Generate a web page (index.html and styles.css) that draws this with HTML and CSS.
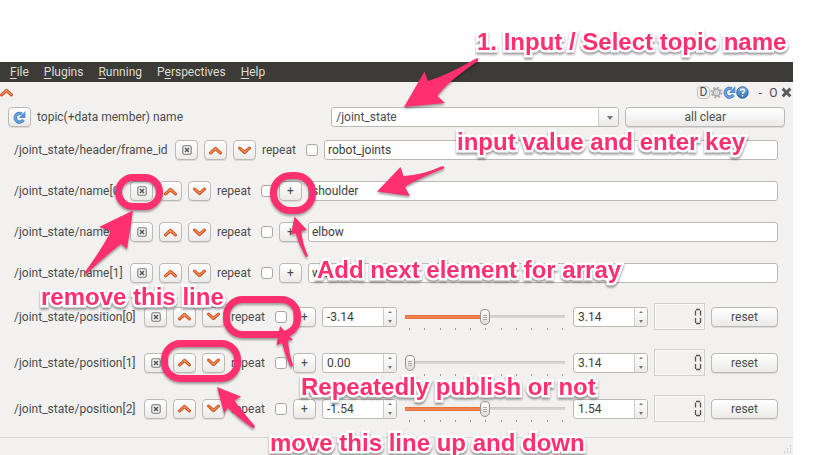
FILE: index.html
```html
<!DOCTYPE html>
<html lang="en">
<head>
<meta charset="utf-8">
<title>Message publisher guide</title>
<link rel="stylesheet" href="styles.css">
</head>
<body>
<svg class="defs" aria-hidden="true">
  <defs>
    <linearGradient id="blue" x1="0" y1="0" x2="0" y2="1"><stop offset="0" stop-color="#7fb4e6"/><stop offset="1" stop-color="#2f6fb0"/></linearGradient>
  </defs>
  <symbol id="up" viewBox="0 0 12 8"><path d="M1.500 6.200 6 2.200l4.500 4" fill="none" stroke="#d0562a" stroke-width="3" stroke-linecap="round" stroke-linejoin="round"/><path d="M1.600 6 6 2.100 10.400 6" fill="none" stroke="#f4955a" stroke-width="1" stroke-linecap="round"/></symbol>
  <symbol id="down" viewBox="0 0 12 8"><path d="M1.500 1.800 6 5.800l4.500-4" fill="none" stroke="#d0562a" stroke-width="3" stroke-linecap="round" stroke-linejoin="round"/><path d="M1.600 1.800 6 5.600l4.400-3.800" fill="none" stroke="#f4955a" stroke-width="1" stroke-linecap="round"/></symbol>
  <symbol id="remove" viewBox="0 0 10 10"><rect x=".8" y=".8" width="8.400" height="8.400" rx="1.500" fill="#f4f4f4" stroke="#777" stroke-width="1.100"/><path d="m3 3 4 4m0-4L3 7" stroke="#555" stroke-width="1.500"/></symbol>
  <symbol id="refresh" viewBox="0 0 14 14"><path d="M11.200 9.600A4.700 4.700 0 1 1 9.600 3.200" fill="none" stroke="#4584c4" stroke-width="3.600"/><path d="M13.300.3v7.200H6.200z" fill="#5291d0"/><path d="M11.200 9.600A4.700 4.700 0 1 1 9.600 3.200" fill="none" stroke="#6fa7de" stroke-width="1.600"/></symbol>
</svg>

<main class="stage">
  <section class="window">
    <nav class="menubar">
      <a href="#"><u>F</u>ile</a><a href="#"><u>P</u>lugins</a><a href="#"><u>R</u>unning</a><a href="#">P<u>e</u>rspectives</a><a href="#"><u>H</u>elp</a>
    </nav>
    <header class="dockbar">
      <svg class="chevron" aria-hidden="true"><use href="#up"/></svg>
      <div class="tools">
        <button class="tool letter" type="button">D</button>
        <button class="tool" type="button" aria-label="Settings"><svg viewBox="0 0 14 14"><circle cx="7" cy="7" r="5.300" fill="none" stroke="#aaa" stroke-width="2" stroke-dasharray="2.100 2.060"/><circle cx="7" cy="7" r="3.600" fill="#eee" stroke="#aaa" stroke-width="1.800"/><circle cx="7" cy="7" r="1.300" fill="#f8f8f8" stroke="#aaa" stroke-width=".8"/></svg></button>
        <button class="tool" type="button" aria-label="Reload"><svg><use href="#refresh"/></svg></button>
        <button class="tool" type="button" aria-label="Help"><svg viewBox="0 0 14 14"><circle cx="7" cy="7" r="6.200" fill="url(#blue)" stroke="#2c639c"/><path d="M4.900 5.300c.1-2.500 4.300-2.400 4.300-.1C9.200 6.800 7 6.700 7 8.500m0 1.200v1.500" fill="none" stroke="#fff" stroke-width="1.500"/></svg></button>
        <button class="tool minimize" type="button">-</button>
        <button class="tool" type="button">O</button>
        <button class="tool" type="button" aria-label="Close"><svg viewBox="0 0 14 14"><path d="m4 4 6 6m0-6-6 6" stroke="#5c5c5c" stroke-width="3.200" stroke-linecap="square"/></svg></button>
      </div>
    </header>

    <div class="topic-row">
      <button class="btn icon-btn" type="button" aria-label="Refresh topics"><svg class="refresh"><use href="#refresh"/></svg></button>
      <label class="topic-label" for="topic">topic(+data member) name</label>
      <div class="combo"><select id="topic"><option>/joint_state</option></select></div>
      <button class="btn clear" type="button">all clear</button>
    </div>

    <div class="lines text-lines" id="text-lines"></div>
    <div class="lines" id="range-lines"></div>

    <footer class="statusbar">
      <svg class="grip" viewBox="0 0 9 9" aria-hidden="true"><path d="M7 1h1M4 4h1m2 0h1M1 7h1m2 0h1m2 0h1" stroke="#c6c3bf" stroke-width="1.500"/></svg>
    </footer>
  </section>

  <svg class="marks" viewBox="0 0 824 455" aria-hidden="true">
    <g fill="none" stroke="#ff2f70" stroke-width="7">
      <rect x="118.500" y="177.500" width="41" height="29" rx="14.500"/>
      <rect x="273.500" y="175.500" width="39" height="35" rx="17"/>
      <rect x="226.500" y="299.500" width="71" height="35" rx="16"/>
      <rect x="164.500" y="343.500" width="73" height="35" rx="16"/>
    </g>
    <g fill="#ff2f70">
      <path d="M404 107 424.500 71.500 428 81Q448 75 476 58.500 479 57.500 478 61 446 83 437.500 96L445 103Z"/>
      <path d="M377 191.500 400.500 167 403.500 176Q423 175 441 166.500 445 165.500 444 168.500 417 179 405 187L410 196Z"/>
      <path d="M133 210.500 127 249 121 244Q103 258 86 274 84 274 85 272 103 247 111 231L99 227Z"/>
      <path d="M294.500 216.500 307 230 301 231Q303 245 308 256 306 258 305 255.500 299 245 295.500 233L291 234.500Z"/>
      <path d="M280 326 293 340 288 340.500Q289 354 293 365 292 368 290 366 285 355 282 343L276.500 345Z"/>
      <path d="M217 387 241 396.500 234.500 400.500Q242 411 254.500 425.500 255 429 252 427.500 238 418 228 408L224 413Z"/>
    </g>
  </svg>
  <p class="note note-topic">1. Input / Select topic name</p>
  <p class="note note-value">input value and enter key</p>
  <p class="note note-add">Add next element for array</p>
  <p class="note note-remove">remove this line</p>
  <p class="note note-repeat">Repeatedly publish or not</p>
  <p class="note note-move">move this line up and down</p>
</main>
<script src="app.js"></script>
</body>
</html>
```
FILE: styles.css
```css
* { box-sizing: border-box; }
body {
  margin: 0;
  background: #fff;
  color: #4c4c4c;
  font: 12px/16px Roboto, "Open Sans", sans-serif;
}
button, input, select { font: inherit; color: inherit; margin: 0; padding: 0; }
.defs { position: absolute; width: 0; height: 0; }
.stage {
  position: relative;
  display: flex;
  min-height: 100vh;
  padding: 62px 31px 0 0;
  overflow: hidden;
}
.window { flex: 1; min-width: 0; display: flex; flex-direction: column; background: #f2f1f0; }

.menubar { display: flex; align-items: center; gap: 15px; height: 20px; padding-left: 10px; background: #3c3b37; }
.menubar a { color: #dfdbd2; text-decoration: none; }
.menubar u { text-underline-offset: 2px; }

.dockbar { display: flex; justify-content: space-between; align-items: center; height: 21px; }
.chevron { width: 13px; height: 9px; }
.tools { display: flex; align-items: center; }
.tool { width: 13px; height: 16px; border: 0; background: none; line-height: 16px; text-align: center; }
.tool svg { display: block; width: 13px; height: 13px; }
.letter { height: 13px; border: 1px solid #c4c2bf; border-radius: 4px; line-height: 11px; }
.minimize { margin-left: 5px; }

.btn {
  height: 20px;
  border: 1px solid #bcb8b4;
  border-radius: 4px;
  background: linear-gradient(#fff, #ebeae9);
  box-shadow: 0 1px 0 #dcdad8;
  line-height: 18px;
  text-align: center;
}
.icon-btn { flex: none; width: 23px; display: flex; align-items: center; justify-content: center; }
.icon-btn svg { width: 13px; height: 9px; }
.icon-btn .remove { width: 10px; height: 10px; }
.icon-btn .refresh { width: 13px; height: 13px; }

.topic-row { display: flex; align-items: center; gap: 6px; height: 28px; padding: 0 8px; }
.topic-label { flex: 289 1 0; }
.combo { position: relative; flex: 289 1 0; height: 20px; }
.combo select {
  appearance: none;
  width: 100%;
  height: 20px;
  padding-left: 4px;
  border: 1px solid #bcb8b4;
  border-radius: 3px;
  background: #fff;
}
.combo::before {
  content: "";
  position: absolute;
  inset: 1px 1px 1px auto;
  width: 19px;
  border-left: 1px solid #cfccc8;
  border-radius: 0 3px 3px 0;
  background: linear-gradient(#fff, #ebeae9);
  pointer-events: none;
}
.combo::after {
  content: "";
  position: absolute;
  top: 9px;
  right: 6px;
  border: 3px solid transparent;
  border-top: 4px solid #777;
  border-bottom: 0;
  pointer-events: none;
}
.clear { flex: 158 1 0; }

.lines { display: flex; flex-direction: column; gap: 19px; padding: 0 15px 0 14px; }
.text-lines { gap: 21px; padding-top: 9px; padding-bottom: 20px; }
.line { display: flex; align-items: center; gap: 6px; height: 20px; }
.range-line { height: 27px; }
.name { flex: none; width: 110px; white-space: nowrap; }
.header-line .name { width: 155px; }
.range-line .name { width: 124px; }
.repeat { flex: none; display: flex; align-items: center; justify-content: space-between; width: 56px; }
.repeat input {
  appearance: none;
  width: 12px;
  height: 12px;
  border: 1px solid #aaa6a2;
  border-radius: 3px;
  background: #fff;
}
.field {
  flex: 1;
  min-width: 0;
  height: 20px;
  padding: 0 3px;
  border: 1px solid #bcb8b4;
  border-radius: 3px;
  background: #fff;
  color: #3c3c3c;
}

.spin {
  flex: none;
  display: flex;
  width: 75px;
  height: 20px;
  border: 1px solid #bcb8b4;
  border-radius: 3px;
  background: #fff;
  overflow: hidden;
}
.spin input { flex: 1; min-width: 0; padding-left: 4px; border: 0; background: none; color: #3c3c3c; }
.steps { display: flex; flex-direction: column; width: 13px; border-left: 1px solid #cfccc8; background: linear-gradient(#fff, #ebeae9); }
.steps button { flex: 1; display: flex; align-items: center; justify-content: center; border: 0; background: none; }
.steps button::before { content: ""; border: 2px solid transparent; border-bottom-color: #777; border-top: 0; }
.steps button:last-child::before { border: 2px solid transparent; border-top: 3px solid #777; border-bottom: 0; }

.slider { position: relative; flex: 1; min-width: 0; height: 20px; margin: 0 2px; }
.slider input {
  appearance: none;
  display: block;
  width: 100%;
  height: 20px;
  background: linear-gradient(#e66a35, #f08a58, #e66a35) 0 8px / var(--fill) 4px no-repeat,
    linear-gradient(#cbc9c6, #dddbd9) 0 8px / 100% 3px no-repeat;
}
.slider input::-webkit-slider-thumb {
  appearance: none;
  width: 10px;
  height: 16px;
  border: 1px solid #96928e;
  border-radius: 4px 4px 5px 5px;
  background: linear-gradient(#aaa, #aaa) center 5px / 4px 1px no-repeat,
    linear-gradient(#aaa, #aaa) center 7px / 4px 1px no-repeat,
    linear-gradient(#aaa, #aaa) center 9px / 4px 1px no-repeat,
    linear-gradient(#fff, #dedcda);
}
.ticks { position: absolute; top: 21px; left: 4px; right: 2px; display: flex; justify-content: space-between; }
.ticks i { width: 1px; height: 2px; background: #999; }

.lcd {
  flex: none;
  display: flex;
  align-items: center;
  justify-content: flex-end;
  width: 51px;
  height: 27px;
  padding-right: 1px;
  border: 1px solid #d2d0cd;
  box-shadow: inset 0 0 0 1px #fafafa;
}
.lcd svg { width: 9px; height: 17px; }
.reset { flex: none; width: 67px; }

.statusbar { flex: 1; display: flex; align-items: flex-end; justify-content: flex-end; min-height: 18px; margin-top: 15px; padding: 1px; border-top: 1px solid #d8d6d3; }
.grip { width: 9px; height: 9px; }

.marks { position: absolute; top: 0; left: 0; width: 824px; height: 455px; pointer-events: none; filter: drop-shadow(0 2px 1px rgb(0 0 0 / 35%)); }
.note {
  position: absolute;
  margin: 0;
  color: #ff2f70;
  font: bold 24px/28px "Liberation Sans", sans-serif;
  white-space: nowrap;
  -webkit-text-stroke: 5px #fff;
  paint-order: stroke fill;
  stroke-linejoin: round;
  filter: drop-shadow(0 2px 1px rgb(0 0 0 / 40%));
  pointer-events: none;
}
.note-topic { left: 477px; top: 28px; }
.note-value { left: 457px; top: 128px; }
.note-add { left: 317px; top: 256px; }
.note-remove { left: 41px; top: 283px; }
.note-repeat { left: 301px; top: 373px; }
.note-move { left: 270px; top: 429px; }
```
FILE: app.js
```js
const iconButton = (icon, label) =>
  `<button class="btn icon-btn" type="button" aria-label="${label}"><svg class="${icon}"><use href="#${icon}"/></svg></button>`;

const controls =
  iconButton("remove", "Remove") + iconButton("up", "Move up") + iconButton("down", "Move down") +
  `<label class="repeat">repeat<input type="checkbox"></label>`;

const addButton = '<button class="btn icon-btn" type="button">+</button>';

const textLines = [
  ["/joint_state/header/frame_id", "robot_joints"],
  ["/joint_state/name[0]", "shoulder"],
  ["/joint_state/name[1]", "elbow"],
  ["/joint_state/name[1]", "wrist"],
];
document.getElementById("text-lines").innerHTML = textLines.map(([name, value], i) => `
  <div class="line ${i ? "" : "header-line"}">
    <label class="name" for="text${i}">${name}</label>${controls}${i ? addButton : ""}
    <input class="field" id="text${i}" type="text" value="${value}">
  </div>`).join("");

const spin = (label, value) => `
  <div class="spin"><input type="text" aria-label="${label}" value="${value}">
  <span class="steps"><button type="button" aria-label="Increase"></button><button type="button" aria-label="Decrease"></button></span></div>`;

const rangeLines = [
  ["/joint_state/position[0]", "-3.14", "3.14", 50],
  ["/joint_state/position[1]", "0.00", "3.14", 0],
  ["/joint_state/position[2]", "-1.54", "1.54", 50],
];
document.getElementById("range-lines").innerHTML = rangeLines.map(([name, min, max, pos], i) => `
  <div class="line range-line">
    <label class="name" for="range${i}">${name}</label>${controls}${addButton}
    ${spin("Minimum", min)}
    <div class="slider"><input id="range${i}" type="range" value="${pos}" style="--fill: ${pos}%"><span class="ticks">${"<i></i>".repeat(11)}</span></div>
    ${spin("Maximum", max)}
    <div class="lcd" role="img" aria-label="0"><svg viewBox="0 0 9 17"><path d="M2 1.500h4M1.500 2.500v5m5-5v5M1.500 10v5m5-5v5M2 15.500h4" fill="none" stroke="#555" stroke-width="1.300"/></svg></div>
    <button class="btn reset" type="button">reset</button>
  </div>`).join("");
```
